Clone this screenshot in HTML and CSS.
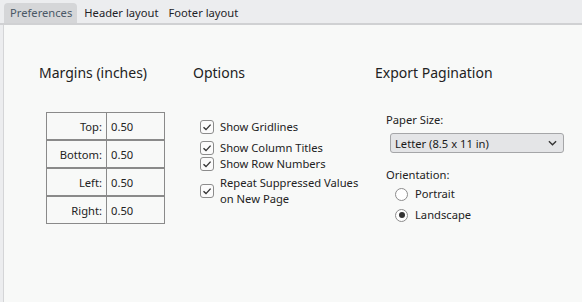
FILE: index.html
```html
<!DOCTYPE html>
<html lang="en">
<head>
    <meta charset="UTF-8">
    <title>Print Settings</title>
    <link rel="stylesheet" href="styles.css">
</head>
<body>

    <!-- Tab strip -->
    <div class="tabs">
        <div class="tab active">Preferences</div>
        <div class="tab">Header layout</div>
        <div class="tab">Footer layout</div>
    </div>

    <div class="panel">
        <!-- Margins -->
        <div class="col col-margins">
            <h2>Margins (inches)</h2>
            <table class="margins">
                <tr><td class="lbl">Top:</td><td class="val">0.50</td></tr>
                <tr><td class="lbl">Bottom:</td><td class="val">0.50</td></tr>
                <tr><td class="lbl">Left:</td><td class="val">0.50</td></tr>
                <tr><td class="lbl">Right:</td><td class="val">0.50</td></tr>
            </table>
        </div>

        <!-- Options -->
        <div class="col col-options">
            <h2>Options</h2>
            <div class="checks">
                <label class="check first"><span class="box"><svg viewBox="0 0 12 12"><path d="M2.5 6.2 L5 8.6 L9.6 3.6"/></svg></span>Show Gridlines</label>
                <label class="check"><span class="box"><svg viewBox="0 0 12 12"><path d="M2.5 6.2 L5 8.6 L9.6 3.6"/></svg></span>Show Column Titles</label>
                <label class="check tight"><span class="box"><svg viewBox="0 0 12 12"><path d="M2.5 6.2 L5 8.6 L9.6 3.6"/></svg></span>Show Row Numbers</label>
                <label class="check multi"><span class="box"><svg viewBox="0 0 12 12"><path d="M2.5 6.2 L5 8.6 L9.6 3.6"/></svg></span>Repeat Suppressed Values<br>on New Page</label>
            </div>
        </div>

        <!-- Export pagination -->
        <div class="col col-export">
            <h2>Export Pagination</h2>
            <div class="field paper">
                <div class="field-label">Paper Size:</div>
                <div class="select">
                    <span>Letter (8.5 x 11 in)</span>
                    <svg class="chev" viewBox="0 0 10 6"><path d="M1 1 L5 5 L9 1"/></svg>
                </div>
            </div>
            <div class="field orient">
                <div class="field-label">Orientation:</div>
                <label class="radio first"><span class="dot"></span>Portrait</label>
                <label class="radio"><span class="dot on"></span>Landscape</label>
            </div>
        </div>
    </div>

</body>
</html>
```

FILE: styles.css
```css
body {
    font-family: "Noto Sans", "Open Sans", sans-serif;
    font-size: 11.2px;
    color: #222;
    background-color: #ecedef;
    margin: 0;
    padding: 0;
    height: 302px;
    display: flex;
    flex-direction: column;
}

.tabs {
    display: flex;
    align-items: flex-end;
    height: 23px;
    padding-left: 4px;
    border-bottom: 2px solid #d0d1d3;
    background-color: #ecedef;
}

.tab {
    height: 20px;
    line-height: 20px;
    padding: 0 5px;
    font-size: 11.2px;
    color: #1f2328;
}

.tab.active {
    padding: 0 5px 0 6px;
    margin-right: 2px;
    background-color: #d5d6d8;
    color: #4a5866;
    border-radius: 4px 4px 0 0;
}

.panel {
    flex: 1;
    display: flex;
    margin-left: 3px;
    border-left: 1px solid #d4d5d7;
    background-color: #f8f9f8;
    padding: 38px 0 0 35px;
}

h2 {
    font-size: 14px;
    font-weight: normal;
    color: #222;
    margin: 0;
    line-height: 20px;
}

.col-margins {
    width: 154px;
}

.col-options {
    width: 182px;
}

.margins {
    margin: 29px 0 0 7px;
    border-spacing: 0;
    border-collapse: separate;
}

.margins td {
    height: 26px;
    padding: 0;
    border-top: 1px solid #8a8a8a;
    border-bottom: 1px solid #8a8a8a;
    border-right: 1px solid #8a8a8a;
}

.margins .lbl {
    width: 55px;
    padding-right: 4px;
    text-align: right;
    border-left: 1px solid #8a8a8a;
}

.margins .val {
    width: 53px;
    padding-left: 4px;
}

.checks {
    margin: 36px 0 0 7px;
}

.check {
    display: flex;
    align-items: center;
    line-height: 16px;
    margin-top: 5px;
}

.check.first,
.check.tight {
    margin-top: 0;
}

.check.multi {
    margin-top: 3px;
}

.box {
    width: 12px;
    height: 12px;
    border: 1px solid #8c8c8c;
    border-radius: 3px;
    background-color: #fbfbfb;
    margin-right: 6px;
    flex-shrink: 0;
}

.box svg {
    display: block;
    width: 12px;
    height: 12px;
}

.box path {
    fill: none;
    stroke: #333;
    stroke-width: 1.4;
}

.field {
    margin-left: 11px;
}

.field-label {
    line-height: 16px;
}

.field.paper {
    margin-top: 29px;
}

.field.orient {
    margin-top: 14px;
}

.select {
    display: flex;
    align-items: center;
    justify-content: space-between;
    width: 162px;
    height: 18px;
    margin: 5px 0 0 4px;
    padding: 0 6px 0 4px;
    border: 1px solid #a5a6a8;
    border-radius: 3px;
    background-color: #e4e5e7;
    color: #1a1a1a;
}

.chev {
    width: 9px;
    height: 6px;
}

.chev path {
    fill: none;
    stroke: #333;
    stroke-width: 1.5;
}

.radio {
    display: flex;
    align-items: center;
    line-height: 18px;
    margin: 3px 0 0 9px;
}

.radio.first {
    margin-top: 2px;
}

.dot {
    width: 11px;
    height: 11px;
    border: 1px solid #8c8c8c;
    border-radius: 50%;
    background-color: #fff;
    margin-right: 7px;
    position: relative;
}

.dot.on::after {
    content: "";
    position: absolute;
    left: 2.5px;
    top: 2.5px;
    width: 6px;
    height: 6px;
    border-radius: 50%;
    background-color: #333;
}
```
